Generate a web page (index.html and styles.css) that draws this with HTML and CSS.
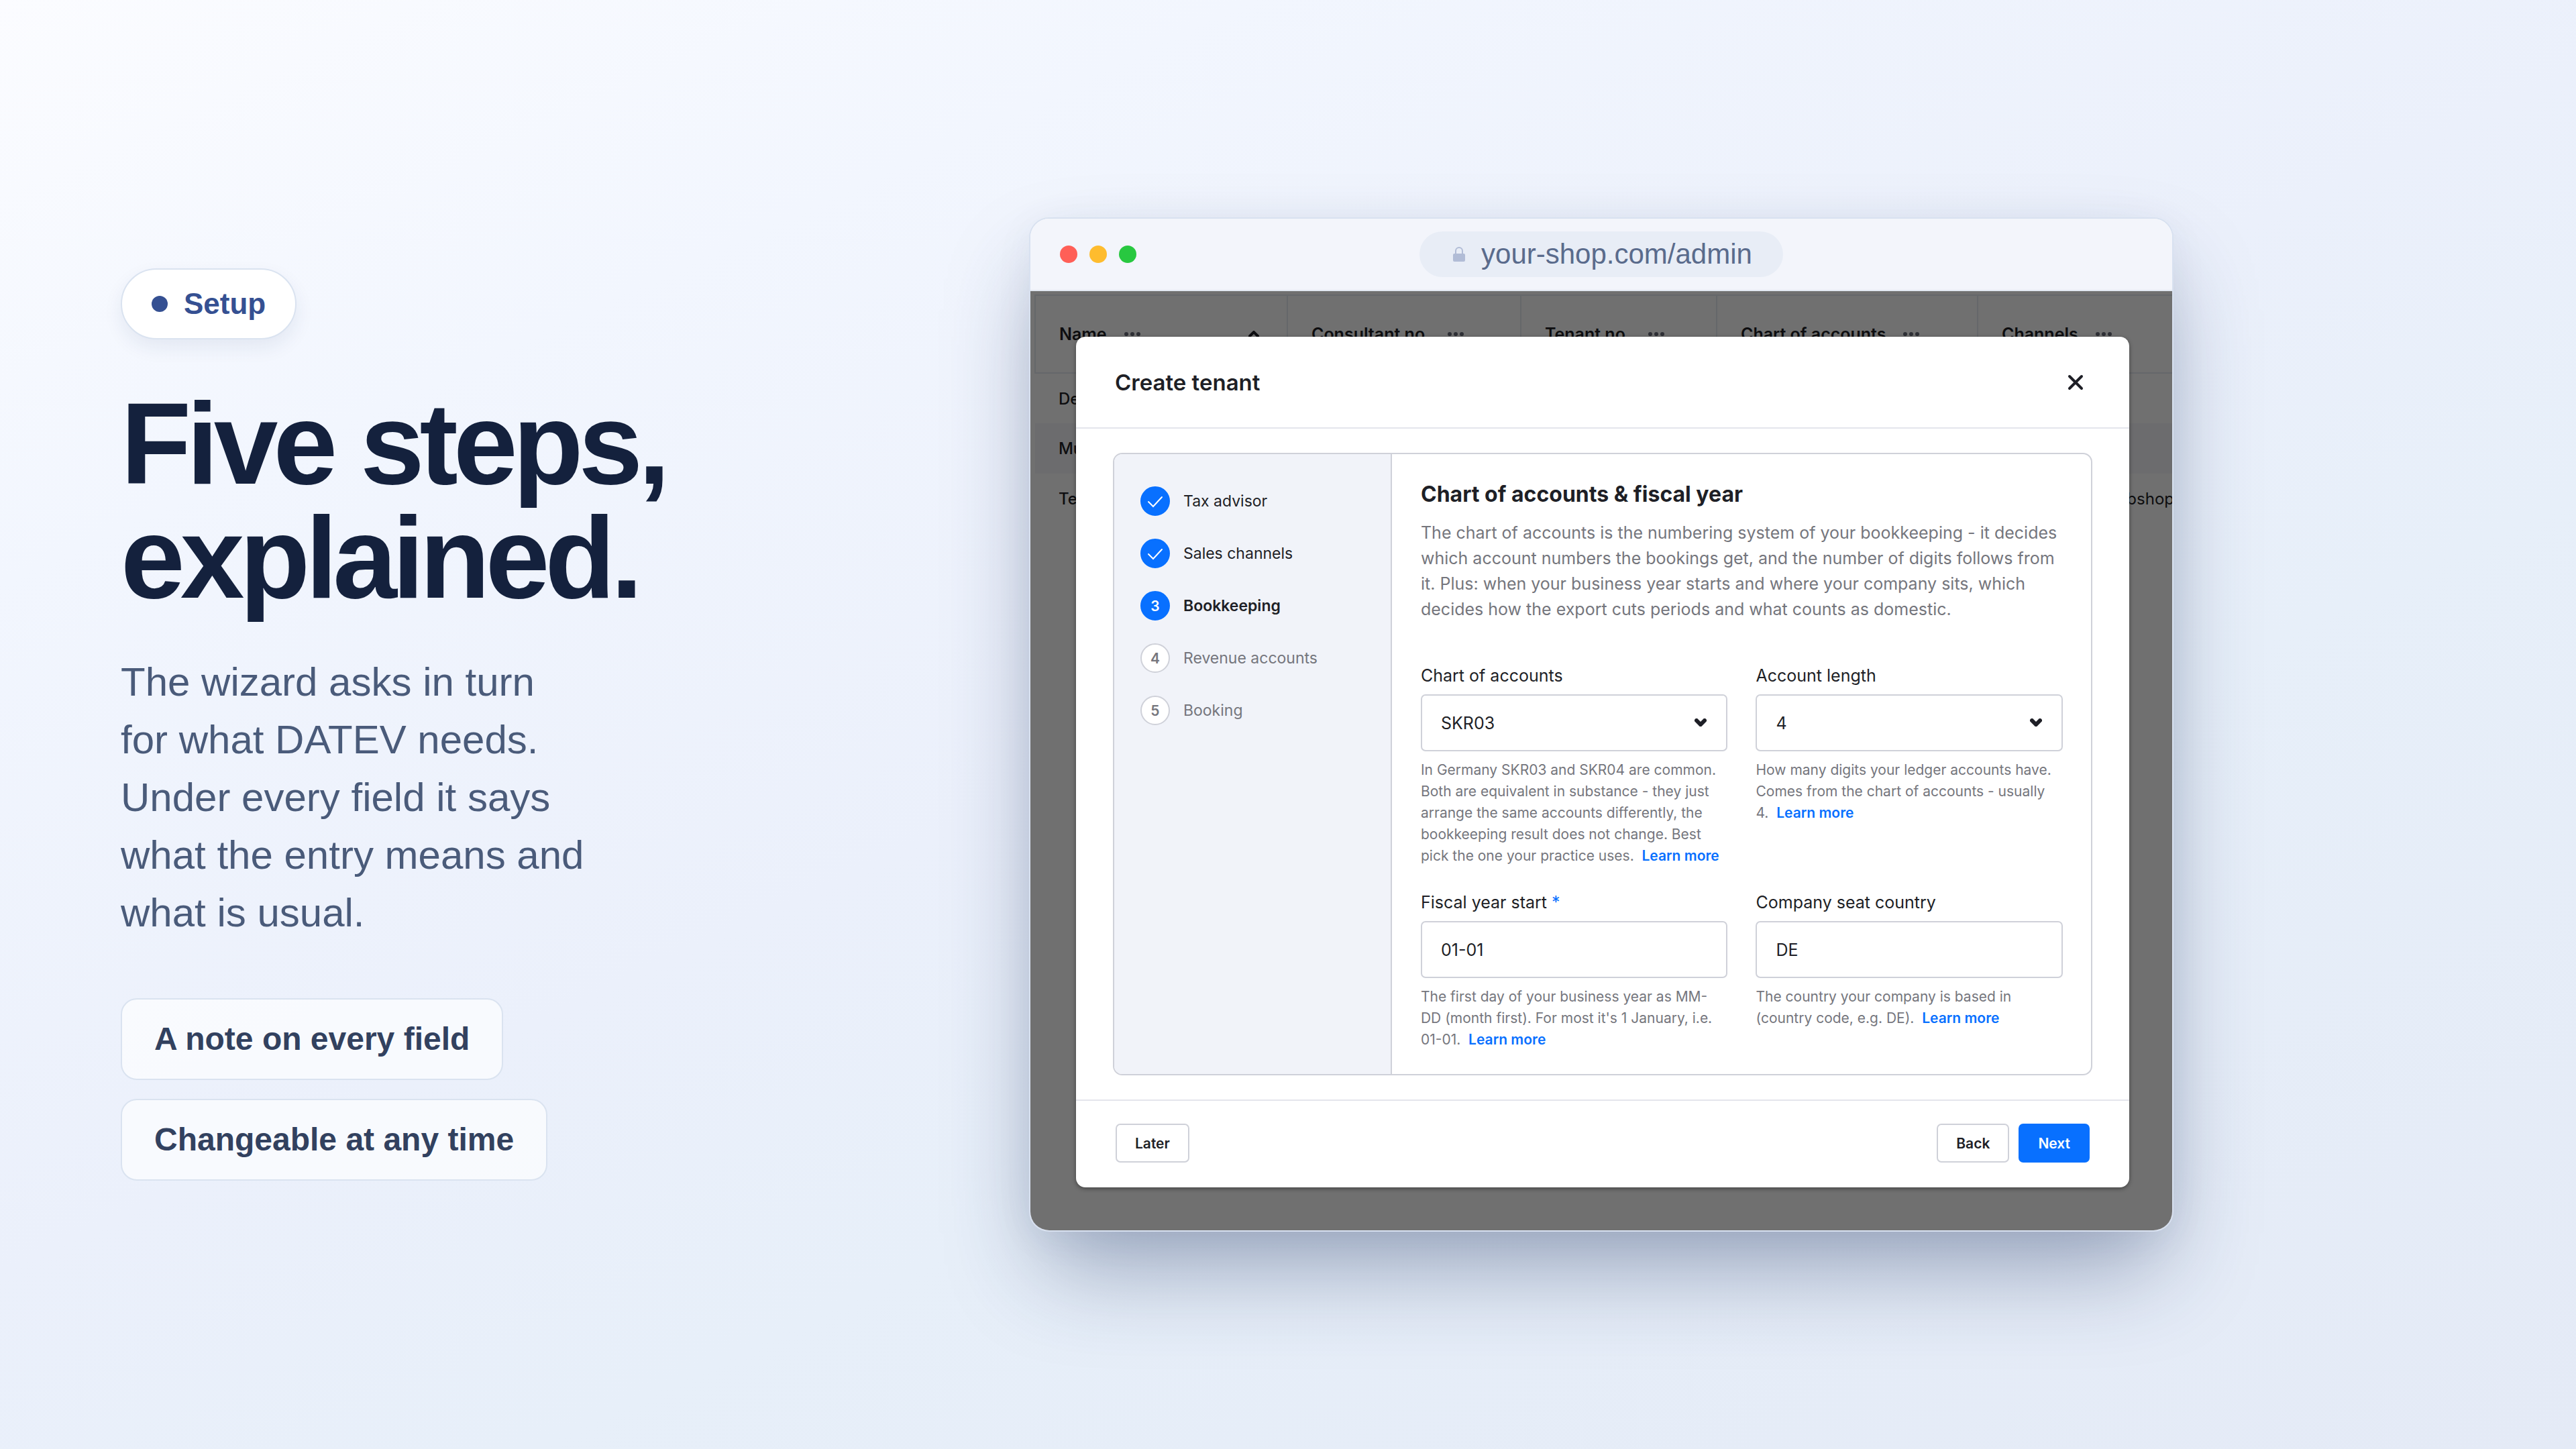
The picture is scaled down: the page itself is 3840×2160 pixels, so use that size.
FILE: index.html
```html
<!DOCTYPE html>
<html lang="en">
<head>
    <meta charset="UTF-8">
    <meta name="viewport" content="width=device-width, initial-scale=1.0">
    <title>Five steps, explained.</title>
    <link rel="stylesheet" href="styles.css">
</head>
<body>
    <main class="slide">
        <section class="intro">
            <span class="badge"><span class="badge-dot"></span>Setup</span>
            <h1>Five steps,<br>explained.</h1>
            <p class="lead">The wizard asks in turn<br>for what DATEV needs.<br>Under every field it says<br>what the entry means and<br>what is usual.</p>
            <ul class="chips">
                <li>A note on every field</li>
                <li>Changeable at any time</li>
            </ul>
        </section>

        <section class="browser">
            <header class="browser-bar">
                <div class="lights">
                    <span class="light red"></span>
                    <span class="light yellow"></span>
                    <span class="light green"></span>
                </div>
                <div class="url">
                    <svg class="lock" viewBox="0 0 18 24" aria-hidden="true">
                        <path d="M4 12V7a5 5 0 0 1 10 0V12" fill="none" stroke="#b1bcd6" stroke-width="2"/>
                        <rect x="0" y="11" width="18" height="12" rx="2" fill="#b1bcd6"/>
                    </svg>
                    <span>your-shop.com/admin</span>
                </div>
            </header>

            <div class="screen">
                <!-- Tenant list behind the dialog -->
                <div class="listing">
                    <table>
                        <colgroup>
                            <col class="col-name">
                            <col class="col-consultant">
                            <col class="col-tenant">
                            <col class="col-chart">
                            <col class="col-channels">
                        </colgroup>
                        <thead>
                            <tr>
                                <th><div class="th">Name <svg class="dots" viewBox="0 0 24 6"><circle cx="3" cy="3" r="3"/><circle cx="12" cy="3" r="3"/><circle cx="21" cy="3" r="3"/></svg><svg class="sort" viewBox="0 0 16 10"><path d="M2 8l6-6 6 6"/></svg></div></th>
                                <th><div class="th">Consultant no. <svg class="dots" viewBox="0 0 24 6"><circle cx="3" cy="3" r="3"/><circle cx="12" cy="3" r="3"/><circle cx="21" cy="3" r="3"/></svg></div></th>
                                <th><div class="th">Tenant no. <svg class="dots" viewBox="0 0 24 6"><circle cx="3" cy="3" r="3"/><circle cx="12" cy="3" r="3"/><circle cx="21" cy="3" r="3"/></svg></div></th>
                                <th><div class="th">Chart of accounts <svg class="dots" viewBox="0 0 24 6"><circle cx="3" cy="3" r="3"/><circle cx="12" cy="3" r="3"/><circle cx="21" cy="3" r="3"/></svg></div></th>
                                <th><div class="th">Channels <svg class="dots" viewBox="0 0 24 6"><circle cx="3" cy="3" r="3"/><circle cx="12" cy="3" r="3"/><circle cx="21" cy="3" r="3"/></svg></div></th>
                            </tr>
                        </thead>
                        <tbody>
                            <tr><td class="name">Demo</td><td></td><td></td><td></td><td></td></tr>
                            <tr><td class="name">Muster</td><td></td><td></td><td></td><td></td></tr>
                            <tr><td class="name">Test</td><td></td><td></td><td></td><td>Storefront A, Webshop</td></tr>
                        </tbody>
                    </table>
                </div>

                <div class="overlay">
                    <div class="modal" role="dialog" aria-labelledby="modal-title">
                        <header class="modal-header">
                            <h2 id="modal-title">Create tenant</h2>
                            <button class="close" type="button" aria-label="Close">
                                <svg viewBox="0 0 24 24"><path d="M3 3l18 18M21 3L3 21"/></svg>
                            </button>
                        </header>

                        <div class="modal-body">
                            <div class="wizard">
                                <ol class="steps">
                                    <li class="done"><span class="circle"><svg viewBox="0 0 24 24"><path d="M2 13l7 7L22 6"/></svg></span>Tax advisor</li>
                                    <li class="done"><span class="circle"><svg viewBox="0 0 24 24"><path d="M2 13l7 7L22 6"/></svg></span>Sales channels</li>
                                    <li class="active"><span class="circle">3</span>Bookkeeping</li>
                                    <li><span class="circle">4</span>Revenue accounts</li>
                                    <li><span class="circle">5</span>Booking</li>
                                </ol>

                                <form class="content">
                                    <h3>Chart of accounts &amp; fiscal year</h3>
                                    <p class="description">The chart of accounts is the numbering system of your bookkeeping - it decides which account numbers the bookings get, and the number of digits follows from it. Plus: when your business year starts and where your company sits, which decides how the export cuts periods and what counts as domestic.</p>

                                    <div class="fields">
                                        <div class="field">
                                            <label for="chart">Chart of accounts</label>
                                            <div class="select">
                                                <select id="chart">
                                                    <option>SKR03</option>
                                                    <option>SKR04</option>
                                                </select>
                                                <svg class="chevron" viewBox="0 0 18 12"><path d="M3 3l6 6 6-6"/></svg>
                                            </div>
                                            <p class="help">In Germany SKR03 and SKR04 are common. Both are equivalent in substance - they just arrange the same accounts differently, the bookkeeping result does not change. Best pick the one your practice uses.&nbsp; <a href="#">Learn more</a></p>
                                        </div>
                                        <div class="field">
                                            <label for="length">Account length</label>
                                            <div class="select">
                                                <select id="length">
                                                    <option>4</option>
                                                    <option>5</option>
                                                </select>
                                                <svg class="chevron" viewBox="0 0 18 12"><path d="M3 3l6 6 6-6"/></svg>
                                            </div>
                                            <p class="help">How many digits your ledger accounts have. Comes from the chart of accounts - usually 4.&nbsp;&nbsp;<a href="#">Learn more</a></p>
                                        </div>
                                        <div class="field">
                                            <label for="fiscal">Fiscal year start <span class="required">*</span></label>
                                            <input type="text" id="fiscal" value="01-01" required>
                                            <p class="help">The first day of your business year as MM-DD (month first). For most it's 1 January, i.e. 01-01.&nbsp; <a href="#">Learn more</a></p>
                                        </div>
                                        <div class="field">
                                            <label for="country">Company seat country</label>
                                            <input type="text" id="country" value="DE">
                                            <p class="help">The country your company is based in (country code, e.g. DE).&nbsp; <a href="#">Learn more</a></p>
                                        </div>
                                    </div>
                                </form>
                            </div>
                        </div>

                        <footer class="modal-footer">
                            <button class="btn" type="button">Later</button>
                            <div class="actions">
                                <button class="btn" type="button">Back</button>
                                <button class="btn primary" type="button">Next</button>
                            </div>
                        </footer>
                    </div>
                </div>
            </div>
        </section>
    </main>
</body>
</html>
```
FILE: styles.css
```css
* {
    box-sizing: border-box;
}

body {
    margin: 0;
    font-family: "Liberation Sans", Arial, sans-serif;
    color: #14213d;
    background: linear-gradient(155deg, #fbfcff 0%, #f2f6fe 22%, #ebf0fb 48%, #e7eff9 64%, #e4eaf6 100%);
}

.slide {
    min-height: 100vh;
    padding: 0 600px 0 180px;
    display: grid;
    grid-template-columns: 1fr 1.26fr;
    align-items: center;
}

/* Left column */
.badge {
    display: inline-flex;
    align-items: center;
    gap: 24px;
    height: 106px;
    padding: 0 44px;
    border: 2px solid #dae3f0;
    border-radius: 53px;
    background: #fff;
    box-shadow: 0 12px 28px rgba(30, 50, 100, 0.08);
    color: #355092;
    font-size: 44px;
    font-weight: bold;
}

.badge-dot {
    width: 24px;
    height: 24px;
    border-radius: 50%;
    background: #355092;
}

h1 {
    margin: 70px 0 58px;
    font-size: 172px;
    line-height: 170px;
    letter-spacing: -7px;
}

.lead {
    margin: 0 0 84px;
    font-size: 60px;
    line-height: 86px;
    color: #4a5b7a;
}

.chips {
    display: flex;
    flex-direction: column;
    align-items: flex-start;
    gap: 28px;
    margin: 0;
    padding: 0;
    list-style: none;
}

.chips li {
    padding: 30px 48px;
    border: 2px solid #dae3f0;
    border-radius: 24px;
    background: rgba(255, 255, 255, 0.65);
    color: #32415f;
    font-size: 48px;
    line-height: 58px;
    font-weight: bold;
}

/* Browser window */
.browser {
    overflow: hidden;
    border: 2px solid #d8e1f0;
    border-radius: 30px;
    background: #fff;
    box-shadow: 0 70px 140px -20px rgba(30, 50, 95, 0.4), 0 10px 60px rgba(30, 50, 95, 0.05);
}

.browser-bar {
    display: grid;
    grid-template-columns: 1fr auto 1fr;
    align-items: center;
    height: 108px;
    padding: 0 44px;
    border-bottom: 2px solid #e2e8f2;
    background: #f3f5fb;
}

.lights {
    display: flex;
    gap: 18px;
}

.light {
    width: 26px;
    height: 26px;
    border-radius: 50%;
}

.red {
    background: #ff5f57;
}

.yellow {
    background: #febc2e;
}

.green {
    background: #28c840;
}

.url {
    display: flex;
    align-items: center;
    gap: 24px;
    height: 68px;
    padding: 0 46px 0 50px;
    border-radius: 34px;
    background: #e8edf6;
    color: #5a6b8c;
    font-size: 42px;
}

.lock {
    width: 18px;
    height: 24px;
}

.screen {
    position: relative;
    font-family: Inter, "Liberation Sans", sans-serif;
    color: #1e1f26;
}

.listing {
    position: absolute;
    inset: 0;
    overflow: hidden;
    padding: 5px 0 0 6px;
}

table {
    width: 1806px;
    table-layout: fixed;
    border-collapse: collapse;
    font-size: 24px;
    text-align: left;
}

.col-name {
    width: 376px;
}

.col-consultant {
    width: 348px;
}

.col-tenant {
    width: 292px;
}

.col-chart {
    width: 389px;
}

th {
    height: 116px;
    padding: 0 35px;
    border: 2px solid #e6eaf1;
    font-size: 25px;
    font-weight: 600;
}

td {
    height: 75px;
    padding: 0 35px;
}

.name {
    font-weight: 500;
}

tbody tr:nth-child(even) {
    background: #f5f5fb;
}

.th {
    display: flex;
    align-items: center;
    gap: 26px;
}

.dots {
    width: 24px;
    height: 6px;
    fill: #6b6f7c;
}

.sort {
    width: 16px;
    height: 10px;
    margin-left: auto;
    margin-right: 6px;
    fill: none;
    stroke: #1e1f26;
    stroke-width: 4;
    stroke-linecap: round;
}

/* Dialog */
.overlay {
    position: relative;
    padding: 68px 64px 64px 68px;
    background: rgba(0, 0, 0, 0.56);
}

.modal {
    border-radius: 14px;
    background: #fff;
    box-shadow: 0 2px 6px rgba(0, 0, 0, 0.4);
}

.modal-header {
    display: flex;
    align-items: center;
    justify-content: space-between;
    height: 137px;
    padding: 0 60px 0 58px;
    border-bottom: 2px solid #e4e5ec;
}

h2 {
    margin: 0;
    font-size: 33px;
    font-weight: 600;
}

.close {
    display: flex;
    padding: 8px;
    border: none;
    background: none;
    cursor: pointer;
}

.close svg {
    width: 24px;
    height: 24px;
    fill: none;
    stroke: #1e1f26;
    stroke-width: 4;
    stroke-linecap: round;
}

.modal-body {
    padding: 36px 55px;
}

.wizard {
    display: flex;
    overflow: hidden;
    border: 2px solid #cfd1d9;
    border-radius: 14px;
}

.steps {
    flex: 0 0 414px;
    display: flex;
    flex-direction: column;
    gap: 34px;
    margin: 0;
    padding: 48px 39px;
    border-right: 2px solid #cfd1d9;
    background: #f1f3f9;
    list-style: none;
    font-size: 23px;
    color: #75767d;
}

.steps li {
    display: flex;
    align-items: center;
    gap: 20px;
}

.circle {
    display: flex;
    align-items: center;
    justify-content: center;
    width: 44px;
    height: 44px;
    border: 2px solid #cfd1d9;
    border-radius: 50%;
    background: #fff;
    font-size: 21px;
    font-weight: 600;
}

.circle svg {
    width: 24px;
    height: 24px;
    fill: none;
    stroke: #fff;
    stroke-width: 2;
    stroke-linecap: round;
}

.steps .done,
.steps .active {
    color: #1e1f26;
}

.steps .active {
    font-weight: 600;
}

.done .circle,
.active .circle {
    border-color: #0870ff;
    background: #0870ff;
    color: #fff;
}

.content {
    flex: 1;
    padding: 40px 42px 35px 43px;
}

h3 {
    margin: 0 0 18px;
    font-size: 32px;
    line-height: 40px;
    font-weight: 700;
}

.description {
    margin: 0 0 62px;
    font-size: 25px;
    line-height: 38px;
    color: #75767d;
}

.fields {
    display: grid;
    grid-template-columns: 1fr 1fr;
    gap: 35px 42px;
}

label {
    display: block;
    margin-bottom: 10px;
    font-size: 25px;
    line-height: 36px;
}

.required {
    color: #0870ff;
}

input,
select {
    display: block;
    width: 100%;
    height: 85px;
    padding: 0 28px;
    border: 2px solid #cfd1d9;
    border-radius: 7px;
    background: #fff;
    color: #1e1f26;
    font-family: inherit;
    font-size: 25px;
    appearance: none;
}

.select {
    position: relative;
}

.chevron {
    position: absolute;
    top: 36px;
    right: 31px;
    width: 18px;
    height: 12px;
    fill: none;
    stroke: #1e1f26;
    stroke-width: 6;
    stroke-linecap: round;
    pointer-events: none;
}

.help {
    margin: 12px 0 0;
    font-size: 21px;
    line-height: 32px;
    color: #75767d;
}

.help a {
    color: #0870ff;
    font-weight: 600;
    text-decoration: none;
    white-space: nowrap;
}

.modal-footer {
    display: flex;
    justify-content: space-between;
    padding: 34px 59px 37px;
    border-top: 2px solid #e4e5ec;
}

.actions {
    display: flex;
    gap: 14px;
}

.btn {
    height: 58px;
    padding: 0 27px;
    border: 2px solid #cfd1d9;
    border-radius: 7px;
    background: #fff;
    color: #1e1f26;
    font-family: inherit;
    font-size: 21px;
    font-weight: 600;
    cursor: pointer;
}

.primary {
    border-color: #0870ff;
    background: #0870ff;
    color: #fff;
}
```
